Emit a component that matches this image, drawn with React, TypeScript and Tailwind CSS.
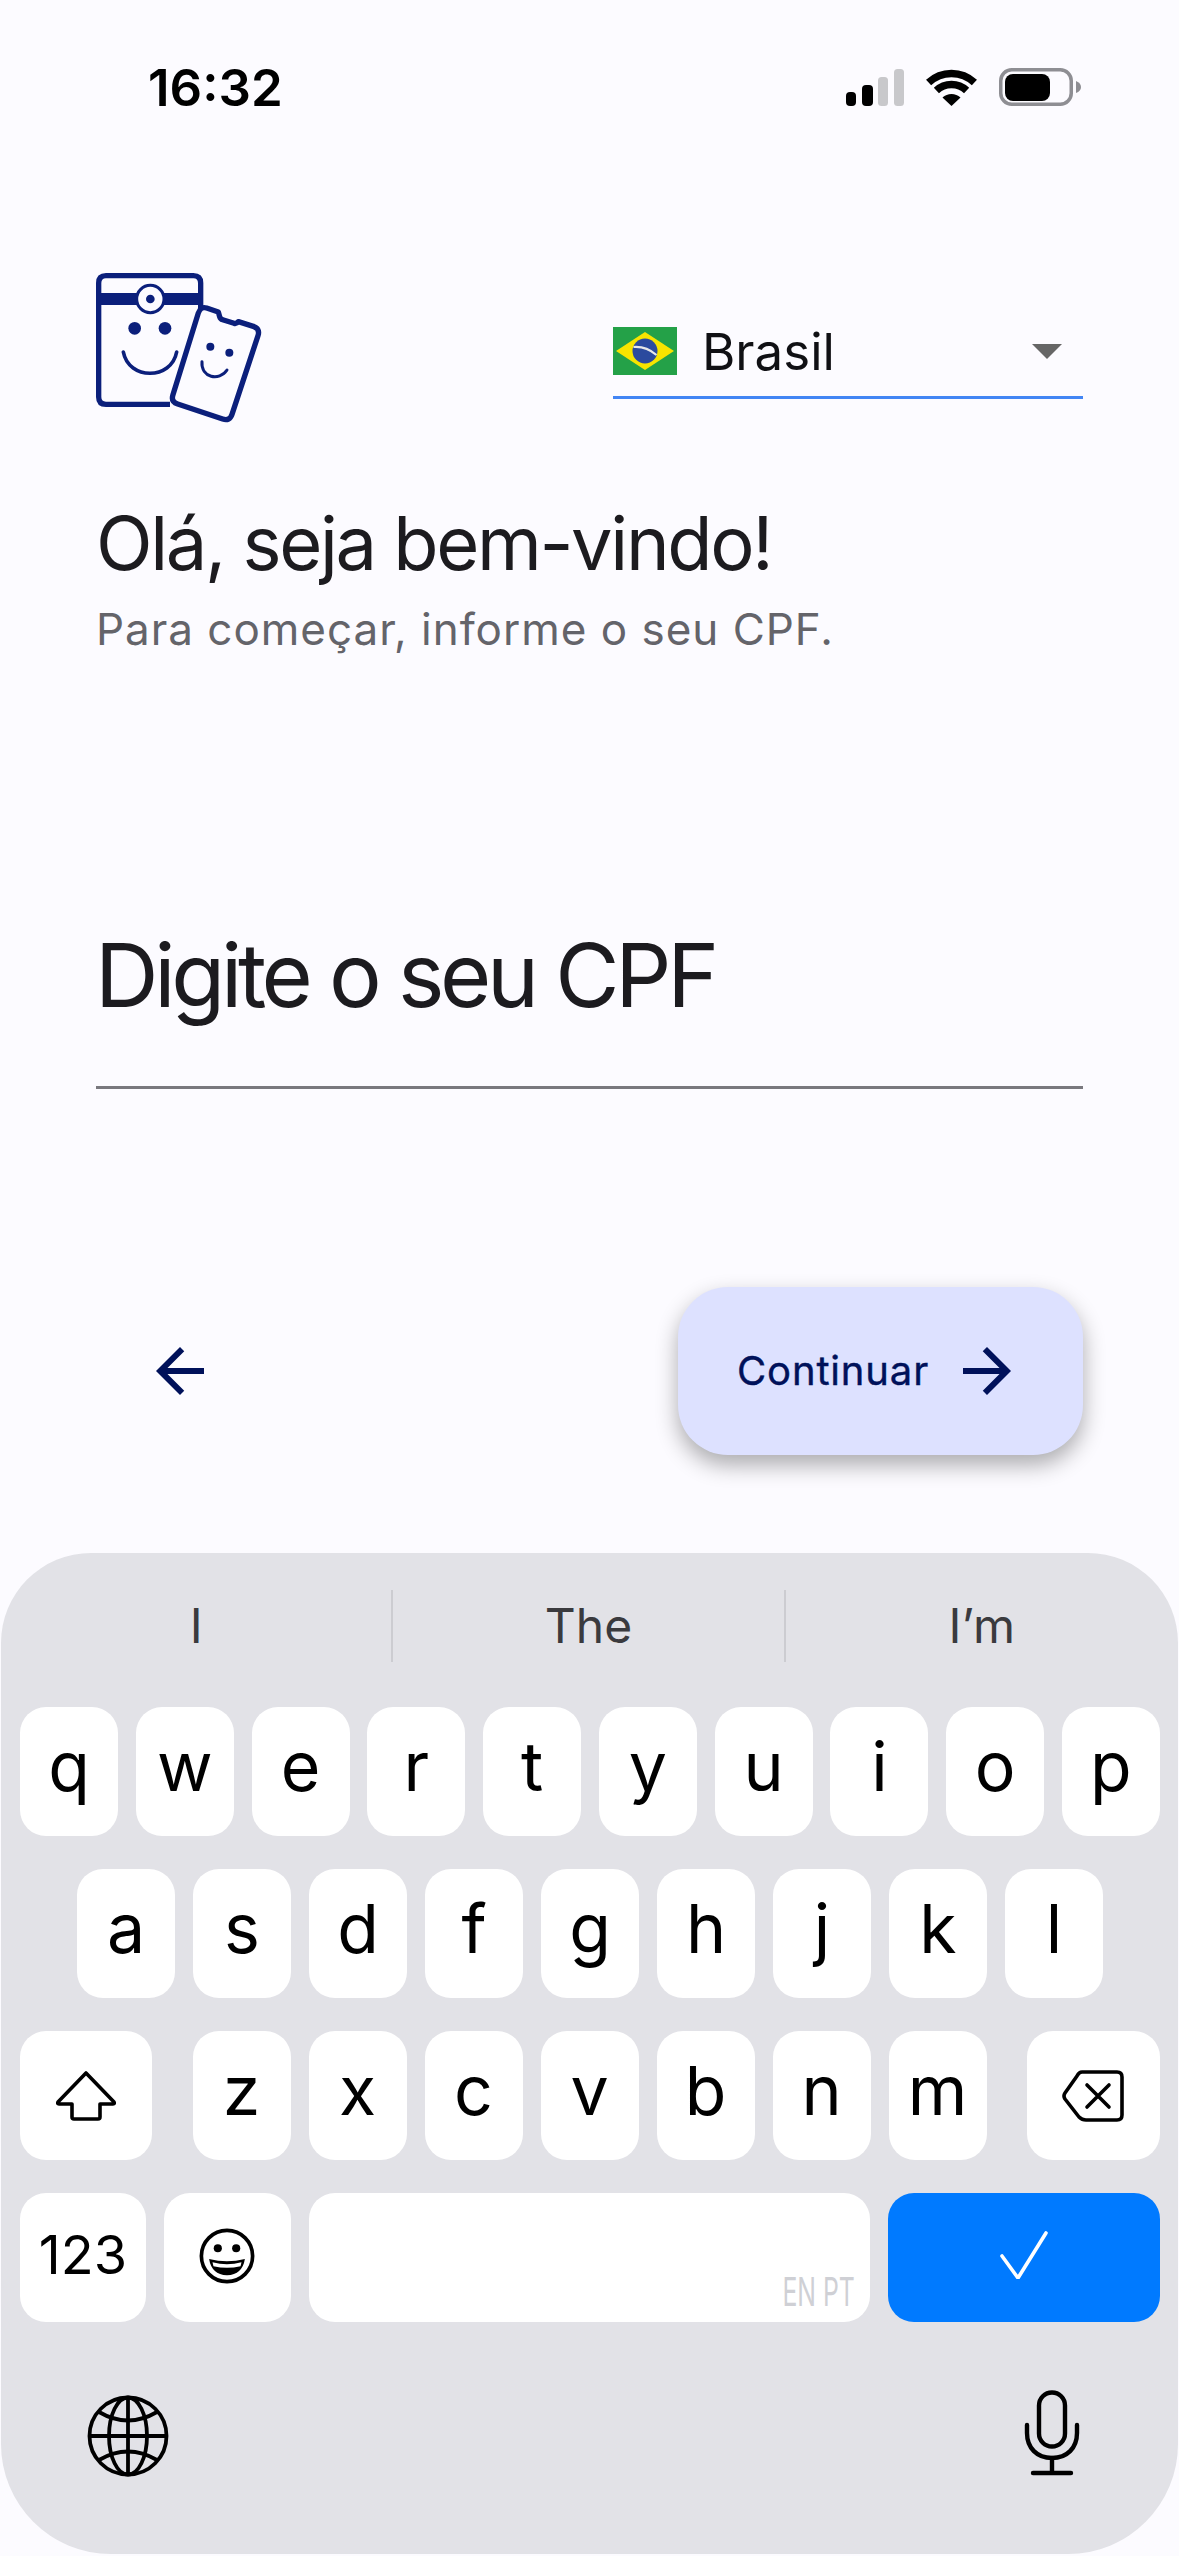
import React from "react";

const INTER = "font-['Inter','Liberation_Sans',sans-serif]";

function Key({ children, className = "w-[98px]" }: { children?: React.ReactNode; className?: string }) {
  return (
    <div className={`relative flex h-[129px] items-center justify-center rounded-[26px] bg-white text-black ${className}`}>
      {children}
    </div>
  );
}

function Letter({ c }: { c: string }) {
  return (
    <Key>
      <span className="pb-[12px] text-[68px] leading-none">{c}</span>
    </Key>
  );
}

function Logo() {
  const navy = "#0B1F7B";
  return (
    <svg width="166" height="150" viewBox="78 70 498 450" fill="none">
      <path d="M300 464 H108 Q86 464 86 442 V100 Q86 78 108 78 H370 Q392 78 392 100 V178" stroke={navy} strokeWidth="16" />
      <rect x="90" y="130" width="302" height="36" fill={navy} />
      <circle cx="241" cy="148" r="41" fill="#FCFBFF" stroke={navy} strokeWidth="9" />
      <circle cx="241" cy="148" r="13" fill={navy} />
      <circle cx="194" cy="236" r="19" fill={navy} />
      <circle cx="285" cy="236" r="19" fill={navy} />
      <path d="M160 307 C176 392 304 392 320 307" stroke={navy} strokeWidth="11" strokeLinecap="round" />
      <path
        d="M410 175 L445 187 L449 201 Q451 208 458 210 L492 221 Q500 223 505 216 L550 230 Q571 237 564 258 L486 494 Q479 515 458 508 L323 463 Q302 456 309 435 L385 190 Q392 169 410 175 Z"
        fill="#FCFBFF"
        stroke={navy}
        strokeWidth="16"
        strokeLinejoin="round"
      />
      <circle cx="421" cy="291" r="12" fill={navy} />
      <circle cx="478" cy="309" r="12" fill={navy} />
      <path d="M396 336 C392 384 448 396 471 361" stroke={navy} strokeWidth="9" strokeLinecap="round" />
    </svg>
  );
}

function Flag() {
  return (
    <svg width="64" height="48" viewBox="0 0 64 48" className="shrink-0">
      <rect width="64" height="48" fill="#24A148" />
      <path d="M32 5 L61 24 L32 43 L3 24 Z" fill="#F7E400" />
      <circle cx="32" cy="24" r="12.5" fill="#2B4A9E" />
      <path d="M20.5 20 Q33 19 43.5 28" stroke="#E8E8E8" strokeWidth="2.2" fill="none" />
    </svg>
  );
}

function StatusIcons() {
  return (
    <div className="flex items-end gap-[22px]">
      <svg width="58" height="37" viewBox="0 0 58 37">
        <rect x="0" y="23" width="10" height="14" rx="4" fill="#000" />
        <rect x="16" y="16" width="11" height="21" rx="4" fill="#000" />
        <rect x="32" y="8" width="10" height="29" rx="3.5" fill="#C8C8CB" />
        <rect x="48" y="0" width="10" height="37" rx="3.5" fill="#C8C8CB" />
      </svg>
      <svg width="51" height="37" viewBox="0 0 51 37" fill="none">
        <path d="M2.6 13.5 A33.5 33.5 0 0 1 48.4 13.5" stroke="#000" strokeWidth="7.5" />
        <path d="M10.4 21.5 A22 22 0 0 1 40.6 21.5" stroke="#000" strokeWidth="7.5" />
        <path d="M25.5 37 L16.5 28.5 A13 13 0 0 1 34.5 28.5 Z" fill="#000" />
      </svg>
      <svg width="82" height="38" viewBox="0 0 82 38" fill="none">
        <rect x="1.75" y="1.75" width="70.5" height="34.5" rx="11" stroke="#8E8E93" strokeWidth="3.5" />
        <rect x="6" y="6" width="45" height="27" rx="8" fill="#000" />
        <path d="M77 13 Q82 15 82 19 Q82 23 77 25 Z" fill="#8E8E93" />
      </svg>
    </div>
  );
}

function ArrowIcon({ dir }: { dir: "back" | "forward" }) {
  return (
    <svg width="72" height="72" viewBox="0 0 24 24" fill="#00115A">
      {dir === "back" ? (
        <path d="M20 11H7.83l5.59-5.59L12 4l-8 8 8 8 1.41-1.41L7.83 13H20v-2z" />
      ) : (
        <path d="M4 11h12.17l-5.59-5.59L12 4l8 8-8 8-1.41-1.41L16.17 13H4v-2z" />
      )}
    </svg>
  );
}

function ShiftIcon() {
  return (
    <svg width="60" height="50" viewBox="0 0 60 50" fill="none">
      <path
        d="M30 2 L58 31 Q59 33 57 33 H44 V46 Q44 48 42 48 H18 Q16 48 16 46 V33 H3 Q1 33 2 31 Z"
        stroke="#000"
        strokeWidth="3.6"
        strokeLinejoin="round"
      />
    </svg>
  );
}

function DeleteIcon() {
  return (
    <svg width="62" height="52" viewBox="0 0 62 52" fill="none" stroke="#000" strokeWidth="3.6" strokeLinecap="round" strokeLinejoin="round">
      <path d="M20 2 H55 Q60 2 60 7 V45 Q60 50 55 50 H24 Q20 50 17 47 L3 29 Q1 26 3 23 L15 6 Q17 2 20 2 Z" />
      <path d="M25 15 L47 37 M47 15 L25 37" />
    </svg>
  );
}

function EmojiIcon() {
  return (
    <svg width="58" height="58" viewBox="0 0 60 60" fill="none">
      <circle cx="30" cy="30" r="26.5" stroke="#000" strokeWidth="3.8" />
      <circle cx="20.5" cy="22" r="4.2" fill="#000" />
      <circle cx="39.5" cy="22" r="4.2" fill="#000" />
      <path d="M11.5 33 Q30 38 48.5 33 Q46 49 30 50 Q14 49 11.5 33 Z" fill="#000" />
      <path d="M15 36.5 Q30 40.5 45 36.5 L44 40.5 Q30 44 16 40.5 Z" fill="#fff" />
    </svg>
  );
}

function GlobeIcon() {
  return (
    <svg width="82" height="82" viewBox="0 0 82 82" fill="none" stroke="#000" strokeWidth="3.8">
      <circle cx="41" cy="41" r="38.5" />
      <ellipse cx="41" cy="41" rx="19" ry="38.5" />
      <path d="M41 2.5 V79.5 M2.5 41 H79.5" />
      <path d="M12 17 Q41 34 70 17" />
      <path d="M12 65 Q41 48 70 65" />
    </svg>
  );
}

function MicIcon() {
  return (
    <svg width="56" height="86" viewBox="0 0 56 86" fill="none" stroke="#000" strokeWidth="4.4" strokeLinecap="round">
      <rect x="15" y="2.5" width="26" height="54" rx="13" />
      <path d="M3 35 V43 C3 58 13 68 28 68 C43 68 53 58 53 43 V35" />
      <path d="M28 68 V82 M9 83 H47" />
    </svg>
  );
}

export default function App() {
  const row1 = "qwertyuiop".split("");
  const row2 = "asdfghjkl".split("");
  const row3 = "zxcvbnm".split("");
  return (
    <div className={`flex h-[2556px] w-[1179px] flex-col overflow-hidden bg-[#FCFBFF] ${INTER}`}>
      {/* status bar */}
      <div className="flex h-[174px] items-center justify-between pl-[148px] pr-[98px]">
        <span className="text-[51px] font-semibold leading-none text-black">16:32</span>
        <StatusIcons />
      </div>

      {/* logo and country */}
      <div className="mt-[99px] flex items-start justify-between px-[96px]">
        <Logo />
        <div className="mt-[53px] w-[470px] border-b-[3px] border-[#4285F4] pb-[20px]">
          <div className="flex h-[50px] items-center">
            <Flag />
            <span className="ml-[25px] text-[51px] leading-none text-[#101014]">Brasil</span>
            <div className="ml-auto mr-[21px] h-0 w-0 border-x-[15px] border-t-[15px] border-x-transparent border-t-[#666666]" />
          </div>
        </div>
      </div>

      {/* heading */}
      <div className="mt-[76px] px-[96px]">
        <h1 className="text-[74px] font-normal leading-[88px] tracking-[-2.35px] text-[#1C1B1F]">Olá, seja bem-vindo!</h1>
        <p className="mt-[14px] text-[44px] leading-[56px] tracking-[0.98px] text-[#64646A]">Para começar, informe o seu CPF.</p>
      </div>

      {/* field */}
      <div className="mx-[96px] mt-[268px] border-b-[3px] border-[#79787E] pb-[61px]">
        <div className="-ml-[1px] text-[88px] leading-[100px] tracking-[-4.3px] text-[#1C1B1F]">Digite o seu CPF</div>
      </div>

      {/* actions */}
      <div className="mt-[198px] flex items-center justify-between pl-[144px] pr-[96px]">
        <ArrowIcon dir="back" />
        <div className="flex h-[168px] w-[405px] items-center justify-between rounded-[50px] bg-[#DDE1FF] pl-[59px] pr-[60px] shadow-[0_10px_22px_rgba(0,0,0,0.32)]">
          <span className="text-[40px] font-normal leading-none tracking-[0.85px] text-[#00115A] [-webkit-text-stroke:0.4px_#00115A]">Continuar</span>
          <ArrowIcon dir="forward" />
        </div>
      </div>

      {/* keyboard */}
      <div className="mx-[1px] mt-[98px] h-[1001px] rounded-t-[90px] rounded-b-[110px] bg-[#E2E2E7] pt-[37px]">
        <div className="grid h-[72px] grid-cols-3 text-[48px] leading-none text-[#3A3A3E]">
          <div className="flex items-center justify-center border-r-2 border-[#CCCCD1]">I</div>
          <div className="flex items-center justify-center border-r-2 border-[#CCCCD1]">The</div>
          <div className="flex items-center justify-center">I’m</div>
        </div>

        <div className="mt-[45px] flex flex-col gap-[33px] pl-[19px] pr-[18px]">
          <div className="flex justify-between">
            {row1.map((c) => (
              <Letter key={c} c={c} />
            ))}
          </div>
          <div className="flex justify-center gap-[18px]">
            {row2.map((c) => (
              <Letter key={c} c={c} />
            ))}
          </div>
          <div className="flex justify-between">
            <Key className="w-[132px]">
              <ShiftIcon />
            </Key>
            <div className="flex gap-[18px]">
              {row3.map((c) => (
                <Letter key={c} c={c} />
              ))}
            </div>
            <Key className="w-[133px]">
              <span className="pr-[2px]">
                <DeleteIcon />
              </span>
            </Key>
          </div>
          <div className="flex gap-[18px]">
            <Key className="w-[126px]">
              <span className="pb-[5px] text-[54px] leading-none">123</span>
            </Key>
            <Key className="w-[127px]">
              <span className="pb-[4px] pr-[2px]">
                <EmojiIcon />
              </span>
            </Key>
            <Key className="w-[561px]">
              <span className="absolute bottom-[10px] right-[15px] origin-right scale-x-[0.62] text-[40px] font-normal leading-none text-[#CFD0D5]">
                EN PT
              </span>
            </Key>
            <div className="flex h-[129px] w-[272px] items-center justify-center rounded-[26px] bg-[#007AFF] pb-[5px]">
              <svg width="48" height="48" viewBox="0 0 48 48" fill="none" stroke="#fff" strokeWidth="3.6" strokeLinecap="round" strokeLinejoin="round">
                <path d="M2 25 L18 47 L46 2" />
              </svg>
            </div>
          </div>
        </div>

        <div className="mt-[68px] flex items-start justify-between pl-[86px] pr-[98px]">
          <div className="mt-[5px]">
            <GlobeIcon />
          </div>
          <MicIcon />
        </div>
      </div>
    </div>
  );
}
